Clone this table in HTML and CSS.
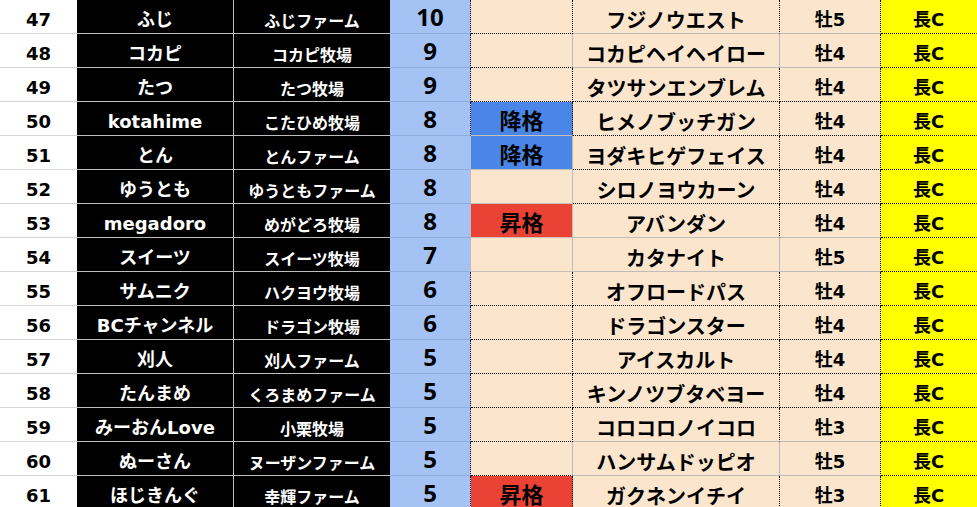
FILE: index.html
```html
<!DOCTYPE html>
<html lang="ja">
<head>
<meta charset="utf-8">
<link rel="stylesheet" href="styles.css">
</head>
<body>
<div class="sheet">
  <div class="row"><div class="c num">47</div><div class="c player">ふじ</div><div class="c farm">ふじファーム</div><div class="c pts dr">10</div><div class="c status dr db"></div><div class="c name dr">フジノウエスト</div><div class="c sex">牡5</div><div class="c dist">長C</div></div>
  <div class="row"><div class="c num">48</div><div class="c player">コカピ</div><div class="c farm">コカピ牧場</div><div class="c pts dr">9</div><div class="c status db"></div><div class="c name">コカピヘイヘイロー</div><div class="c sex">牡4</div><div class="c dist">長C</div></div>
  <div class="row"><div class="c num">49</div><div class="c player">たつ</div><div class="c farm">たつ牧場</div><div class="c pts dr">9</div><div class="c status dr db"></div><div class="c name dr db">タツサンエンブレム</div><div class="c sex db">牡4</div><div class="c dist">長C</div></div>
  <div class="row"><div class="c num">50</div><div class="c player">kotahime</div><div class="c farm">こたひめ牧場</div><div class="c pts dr">8</div><div class="c status down dr">降格</div><div class="c name dr db">ヒメノブッチガン</div><div class="c sex db">牡4</div><div class="c dist">長C</div></div>
  <div class="row"><div class="c num">51</div><div class="c player">とん</div><div class="c farm">とんファーム</div><div class="c pts">8</div><div class="c status down">降格</div><div class="c name dr db">ヨダキヒゲフェイス</div><div class="c sex db">牡4</div><div class="c dist">長C</div></div>
  <div class="row"><div class="c num">52</div><div class="c player">ゆうとも</div><div class="c farm">ゆうともファーム</div><div class="c pts">8</div><div class="c status"></div><div class="c name dr db">シロノヨウカーン</div><div class="c sex db">牡4</div><div class="c dist">長C</div></div>
  <div class="row"><div class="c num">53</div><div class="c player">megadoro</div><div class="c farm">めがどろ牧場</div><div class="c pts">8</div><div class="c status up">昇格</div><div class="c name dr">アバンダン</div><div class="c sex">牡4</div><div class="c dist">長C</div></div>
  <div class="row"><div class="c num">54</div><div class="c player">スイーツ</div><div class="c farm">スイーツ牧場</div><div class="c pts">7</div><div class="c status"></div><div class="c name">カタナイト</div><div class="c sex">牡5</div><div class="c dist">長C</div></div>
  <div class="row"><div class="c num">55</div><div class="c player">サムニク</div><div class="c farm">ハクヨウ牧場</div><div class="c pts dr">6</div><div class="c status dr db"></div><div class="c name dr db">オフロードパス</div><div class="c sex db">牡4</div><div class="c dist">長C</div></div>
  <div class="row"><div class="c num">56</div><div class="c player">BCチャンネル</div><div class="c farm">ドラゴン牧場</div><div class="c pts dr">6</div><div class="c status dr db"></div><div class="c name dr db">ドラゴンスター</div><div class="c sex db">牡4</div><div class="c dist">長C</div></div>
  <div class="row"><div class="c num">57</div><div class="c player">刈人</div><div class="c farm">刈人ファーム</div><div class="c pts dr">5</div><div class="c status dr db"></div><div class="c name dr db">アイスカルト</div><div class="c sex db">牡4</div><div class="c dist">長C</div></div>
  <div class="row"><div class="c num">58</div><div class="c player">たんまめ</div><div class="c farm">くろまめファーム</div><div class="c pts dr">5</div><div class="c status dr db"></div><div class="c name dr db">キンノツブタベヨー</div><div class="c sex db">牡4</div><div class="c dist">長C</div></div>
  <div class="row"><div class="c num">59</div><div class="c player">みーおんLove</div><div class="c farm">小栗牧場</div><div class="c pts dr">5</div><div class="c status dr db"></div><div class="c name dr">コロコロノイコロ</div><div class="c sex">牡3</div><div class="c dist">長C</div></div>
  <div class="row"><div class="c num">60</div><div class="c player">ぬーさん</div><div class="c farm">ヌーザンファーム</div><div class="c pts dr">5</div><div class="c status db"></div><div class="c name">ハンサムドッピオ</div><div class="c sex">牡5</div><div class="c dist">長C</div></div>
  <div class="row"><div class="c num">61</div><div class="c player">ほじきんぐ</div><div class="c farm">幸輝ファーム</div><div class="c pts dr">5</div><div class="c status up dr db">昇格</div><div class="c name dr db">ガクネンイチイ</div><div class="c sex db">牡3</div><div class="c dist">長C</div></div>
</div>
</body>
</html>
```
FILE: styles.css
```css
body {
  margin: 0;
  background: #ffffff;
  font-family: "DejaVu Sans", "Noto Sans CJK JP", sans-serif;
  font-weight: 700;
  color: #000;
}

.sheet {
  width: 977px;
  overflow: hidden;
}

.row {
  display: grid;
  grid-template-columns: 77px 157px 156px 81px 102px 207px 101px 96px;
  height: 34px;
}

.c {
  box-sizing: border-box;
  display: flex;
  align-items: center;
  justify-content: center;
  white-space: nowrap;
  border-right: 1px solid transparent;
  border-bottom: 1px solid #c0c0c0;
  padding-top: 6px;
  line-height: 1;
}

.num {
  font-size: 18px;
  border-right: 0;
  border-bottom-color: #d4d4d4;
  background: #fff;
}

.player {
  background: #000;
  color: #fff;
  font-size: 18px;
  border-right: 1px solid #bdbdbd;
  border-bottom-color: #bdbdbd;
}

.farm {
  background: #000;
  color: #fff;
  font-size: 15px;
  border-right: 0;
  border-bottom-color: #bdbdbd;
}

.farm {
  font-family: "Noto Sans CJK JP", "DejaVu Sans", sans-serif;
  font-size: 16px;
  padding-top: 7px;
}

.pts {
  background: #a4c2f4;
  font-family: "Open Sans", sans-serif;
  font-size: 24px;
  padding-top: 0;
  border-right: 1px solid #bcbcbc;
  border-bottom-color: #8eaee2;
}

.status {
  background: #fce5cd;
  font-family: "Noto Sans CJK JP", sans-serif;
  font-size: 22px;
  padding-top: 0;
  border-right: 1px solid #bcbcbc;
  border-bottom-color: #c8c0b8;
}

.status.down {
  background: #4a86e8;
}

.status.up {
  background: #ea4335;
}

.name {
  background: #fce5cd;
  font-family: "Noto Sans CJK JP", sans-serif;
  font-size: 20px;
  border-right: 1px solid #bcbcbc;
  border-bottom-color: #bcbcbc;
}

.sex {
  background: #fce5cd;
  font-size: 18px;
  border-right: 1px dotted #000;
  border-bottom-color: #bcbcbc;
}

.dist {
  background: #ffff00;
  font-size: 18px;
  border-bottom: 1px dotted #000;
}

.dr {
  border-right: 1px dotted #000;
}

.db {
  border-bottom: 1px dotted #000;
}
```
